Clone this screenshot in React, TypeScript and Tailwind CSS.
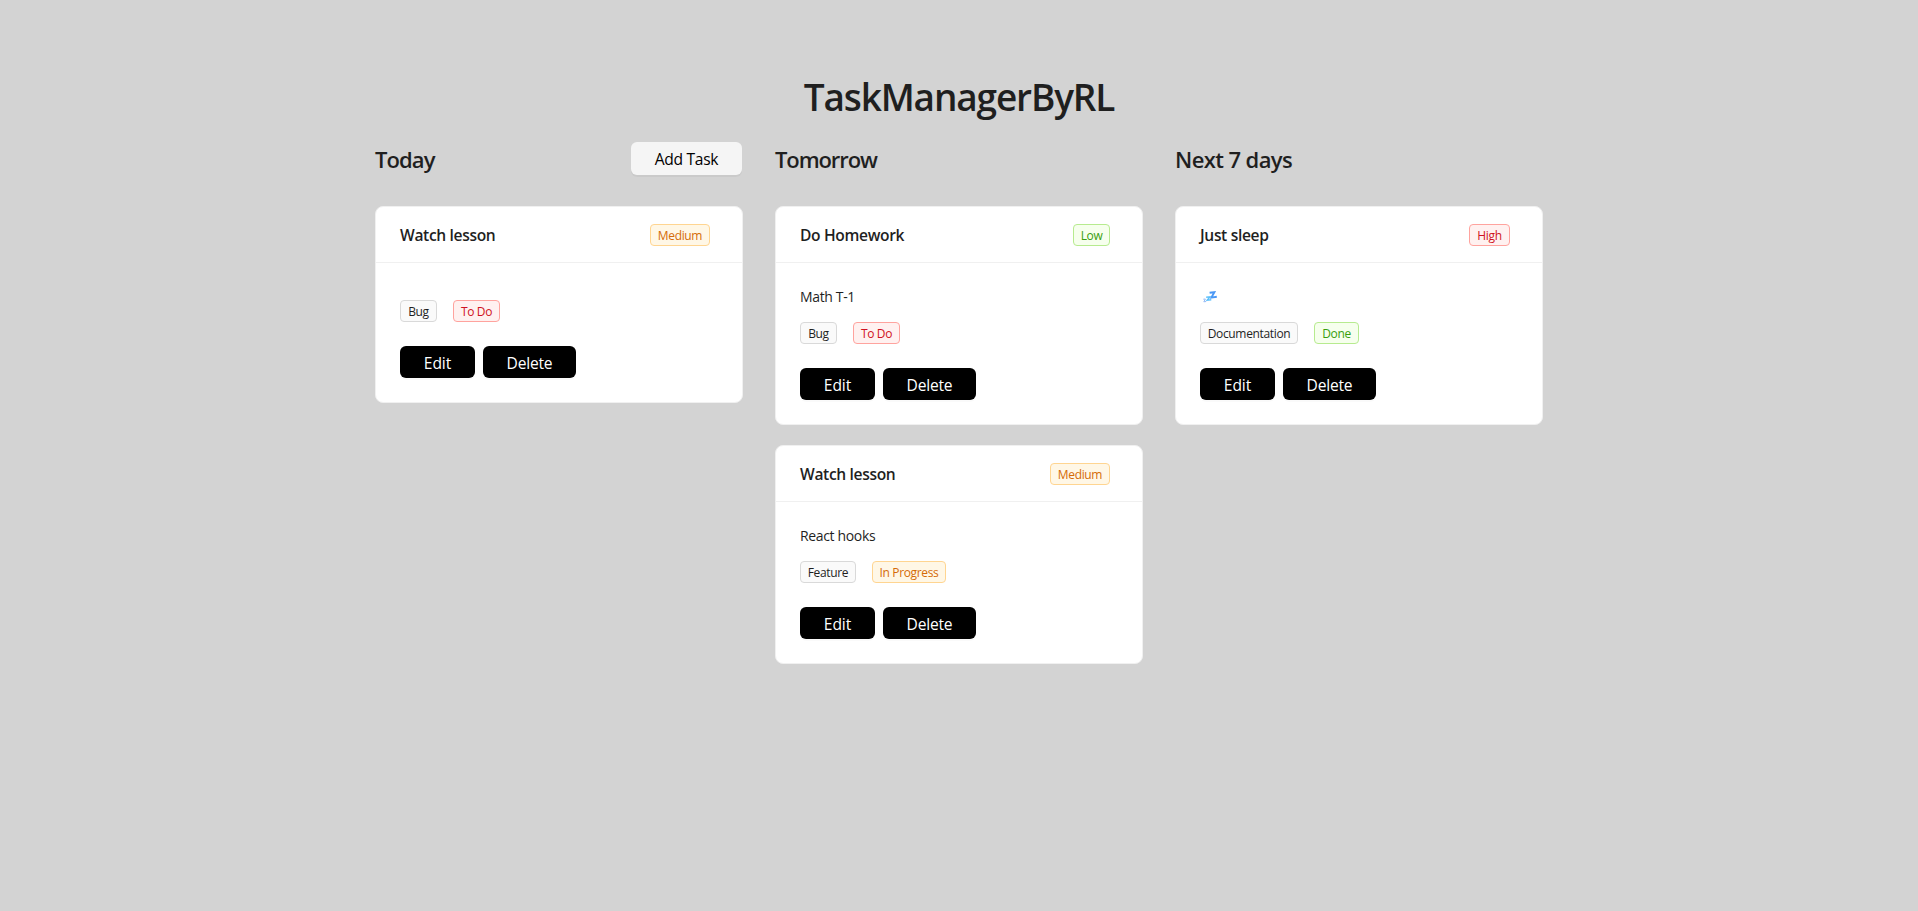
type Tone = 'default' | 'red' | 'orange' | 'green';

interface Label {
  text: string;
  tone: Tone;
  width: string;
}

interface Task {
  title: string;
  description: string;
  priority: Label;
  kind: Label;
  status: Label;
}

interface Column {
  name: string;
  tracking: string;
  canAdd?: boolean;
  tasks: Task[];
}

const toneClass: Record<Tone, string> = {
  default: 'border-[#d9d9d9] bg-[#fafafa] text-[#1f1f1f]',
  red: 'border-[#ffa39e] bg-[#fff1f0] text-[#cf1322]',
  orange: 'border-[#ffd591] bg-[#fff7e6] text-[#d46b08]',
  green: 'border-[#b7eb8f] bg-[#f6ffed] text-[#389e0d]',
};

const medium: Label = { text: 'Medium', tone: 'orange', width: 'w-[60px]' };
const low: Label = { text: 'Low', tone: 'green', width: 'w-[37px]' };
const high: Label = { text: 'High', tone: 'red', width: 'w-[41px]' };
const bug: Label = { text: 'Bug', tone: 'default', width: 'w-[37px]' };
const feature: Label = { text: 'Feature', tone: 'default', width: 'w-[56px]' };
const docs: Label = { text: 'Documentation', tone: 'default', width: 'w-[98px]' };
const todo: Label = { text: 'To Do', tone: 'red', width: 'w-[47px]' };
const inProgress: Label = { text: 'In Progress', tone: 'orange', width: 'w-[74px]' };
const done: Label = { text: 'Done', tone: 'green', width: 'w-[45px]' };

const columns: Column[] = [
  {
    name: 'Today',
    tracking: 'tracking-[-0.9px]',
    canAdd: true,
    tasks: [{ title: 'Watch lesson', description: '', priority: medium, kind: bug, status: todo }],
  },
  {
    name: 'Tomorrow',
    tracking: 'tracking-[-1.1px]',
    tasks: [
      { title: 'Do Homework', description: 'Math T-1', priority: low, kind: bug, status: todo },
      { title: 'Watch lesson', description: 'React hooks', priority: medium, kind: feature, status: inProgress },
    ],
  },
  {
    name: 'Next 7 days',
    tracking: 'tracking-[-0.6px]',
    tasks: [{ title: 'Just sleep', description: 'zzz', priority: high, kind: docs, status: done }],
  },
];

function Tag({ label }: { label: Label }) {
  return (
    <span
      className={`flex h-[22px] items-center justify-center whitespace-nowrap rounded-[4px] border pt-px text-[12px] leading-5 tracking-[-0.35px] ${label.width} ${toneClass[label.tone]}`}
    >
      {label.text}
    </span>
  );
}

function SleepIcon() {
  return (
    <svg className="ml-[3px] h-3 w-[15px]" viewBox="0 0 15 12" fill="none" strokeLinejoin="miter">
      <path d="M6.6 1.8 L11.4 1.2 L8.4 6.6 L13.8 5.8" stroke="#4a97f5" strokeWidth="1.9" />
      <path d="M3.2 6.3 L6.8 5.9 L4.2 9.2 L8.3 8.8" stroke="#5cc0fb" strokeWidth="1.4" />
      <path d="M0.3 8.2 L2.4 8 L0.8 10.8 L3.2 10.5" stroke="#94b9f5" strokeWidth="1" />
    </svg>
  );
}

function TaskCard({ task }: { task: Task }) {
  return (
    <article className="rounded-lg border border-[#f0f0f0] bg-white">
      <header className="flex h-14 items-center justify-between border-b border-[#f0f0f0] pl-6 pr-8 pt-px">
        <h3 className="pt-px text-[15.6px] font-[560] tracking-[-0.35px]">{task.title}</h3>
        <Tag label={task.priority} />
      </header>
      <div className="p-6">
        {task.description === 'zzz' ? (
          <div className="h-[22px] pt-1">
            <SleepIcon />
          </div>
        ) : (
          task.description && (
            <p className="h-[22px] text-[14px] leading-5 tracking-[-0.35px]">{task.description}</p>
          )
        )}
        <div className="mt-[13px] flex gap-4">
          <Tag label={task.kind} />
          <Tag label={task.status} />
        </div>
        <div className="mt-6 flex gap-2 text-[15.6px] leading-6 text-white">
          <button className="h-8 w-[75px] rounded-md bg-black pt-px tracking-[-0.1px] shadow-[0_2px_0_rgba(0,0,0,0.02)]">
            Edit
          </button>
          <button className="h-8 w-[93px] rounded-md bg-black pt-px tracking-[-0.2px] shadow-[0_2px_0_rgba(0,0,0,0.02)]">
            Delete
          </button>
        </div>
      </div>
    </article>
  );
}

export default function App() {
  return (
    <div className="min-h-screen bg-[#d3d3d3] pt-[74px] font-['Open_Sans','Noto_Sans',sans-serif] text-[#1f1f1f]">
      <h1 className="text-center text-[37px] font-[560] leading-[46px] tracking-[-1.15px]">TaskManagerByRL</h1>
      <main className="mx-auto mt-[22px] grid w-[1168px] grid-cols-3 gap-8">
        {columns.map((column) => (
          <section key={column.name}>
            <div className="flex h-[33px] items-center justify-between pr-px">
              <h2 className={`text-[22px] font-[560] leading-8 ${column.tracking}`}>{column.name}</h2>
              {column.canAdd && (
                <button className="h-[33px] w-[111px] rounded-md bg-[#f5f5f5] pt-0.5 text-[15.6px] tracking-[-0.3px] text-black shadow-[0_2px_0_rgba(0,0,0,0.04)]">
                  Add Task
                </button>
              )}
            </div>
            <div className="mt-[31px] flex flex-col gap-5">
              {column.tasks.map((task) => (
                <TaskCard key={task.title} task={task} />
              ))}
            </div>
          </section>
        ))}
      </main>
    </div>
  );
}
